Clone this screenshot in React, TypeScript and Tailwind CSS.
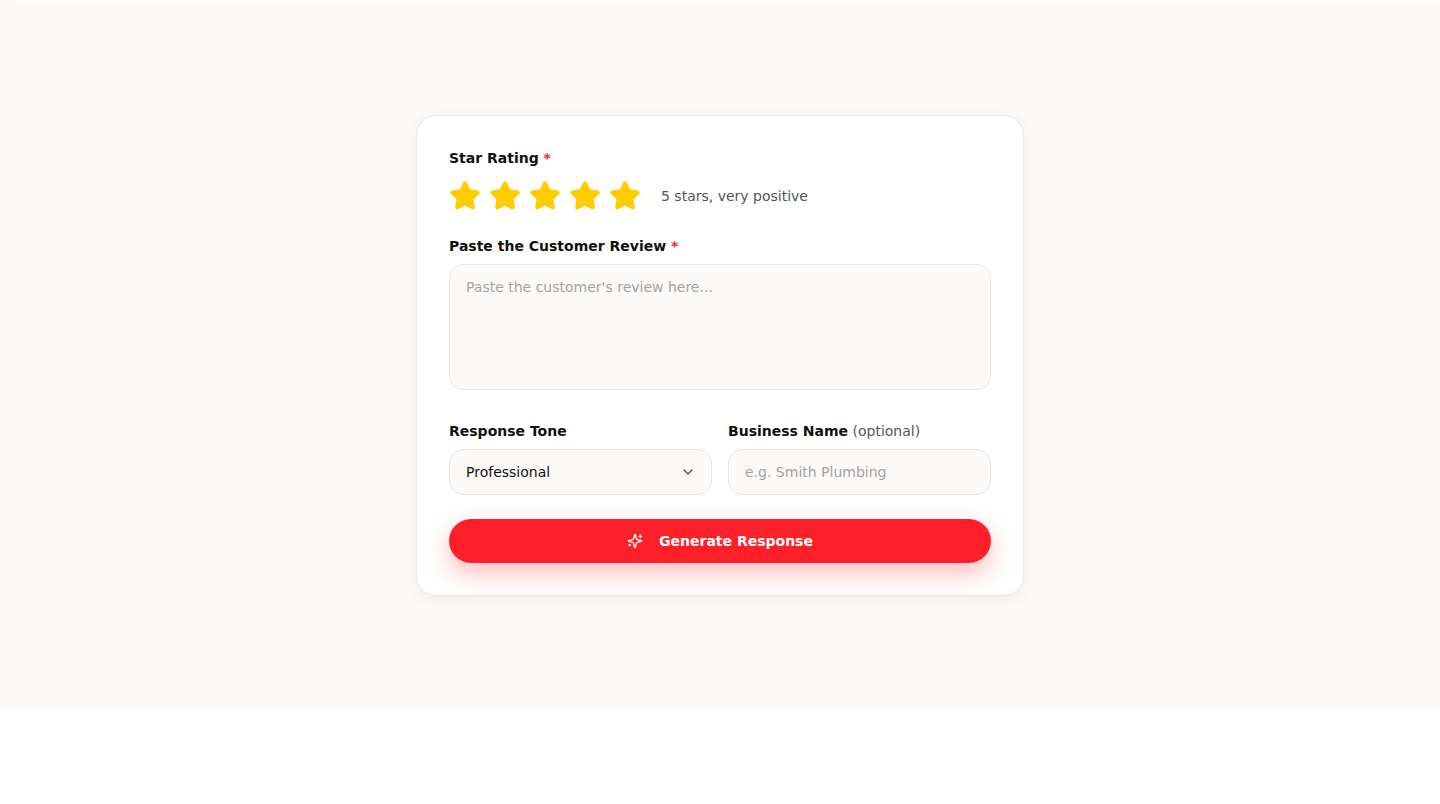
import { ChevronDown, Star } from 'lucide-react'

const font = 'font-["DejaVu_Sans","Liberation_Sans",sans-serif]'

function Label({ text, required, hint }: { text: string; required?: boolean; hint?: string }) {
  return (
    <div className="text-[14px] leading-5 font-bold text-[#111111]">
      {text}
      {required && <span className="text-[#ff1f29]"> *</span>}
      {hint && <span className="font-normal text-[#555555]"> {hint}</span>}
    </div>
  )
}

// older lucide sparkles, the installed one has a circle in place of the small plus
function SparkIcon() {
  return (
    <svg width="16" height="16" viewBox="0 0 24 24" fill="none" stroke="currentColor" strokeWidth="2" strokeLinecap="round" strokeLinejoin="round">
      <path d="M9.937 15.5A2 2 0 0 0 8.5 14.063l-6.135-1.582a.5.5 0 0 1 0-.962L8.5 9.936A2 2 0 0 0 9.937 8.5l1.582-6.135a.5.5 0 0 1 .963 0L14.063 8.5A2 2 0 0 0 15.5 9.937l6.135 1.581a.5.5 0 0 1 0 .964L15.5 14.063a2 2 0 0 0-1.437 1.437l-1.582 6.135a.5.5 0 0 1-.963 0z" />
      <path d="M20 3v4" />
      <path d="M22 5h-4" />
      <path d="M4 17v2" />
      <path d="M5 18H3" />
    </svg>
  )
}

export default function App() {
  return (
    <div className={`${font} bg-white min-h-[804px]`}>
      <div className="h-[708px] bg-[#fcfaf8] flex flex-col">
        <div className="h-[2px] ml-4 bg-[#fffefd]" />
        <div className="flex justify-center pt-[113px]">
          <div className="w-[608px] h-[481px] rounded-[20px] bg-white border border-[#e8e6e4] p-8 shadow-[0_4px_16px_rgba(0,0,0,0.05)] opacity-[0.999]">
            <Label text="Star Rating" required />
            <div className="flex items-center mt-3 h-8">
              <div className="flex gap-2">
                {[1, 2, 3, 4, 5].map(n => (
                  <Star key={n} size={32} className="text-[#ffcc00] fill-[#ffcc00]" />
                ))}
              </div>
              <span className="ml-5 text-[14px] text-[#555555]">5 stars, very positive</span>
            </div>

            <div className="mt-6">
              <Label text="Paste the Customer Review" required />
            </div>
            <textarea
              placeholder="Paste the customer's review here..."
              className="block mt-2 w-full h-[126px] resize-none rounded-[14px] border border-[#e8e6e4] bg-[#fcfaf8] px-4 py-3 text-[14px] leading-5 outline-none placeholder:text-[#a3a3a3]"
            />

            <div className="grid grid-cols-2 gap-4 mt-[31px]">
              <div>
                <Label text="Response Tone" />
                <div className="mt-2 h-[46px] flex items-center justify-between rounded-[14px] border border-[#e8e6e4] bg-[#fcfaf8] pl-4 pr-[15px] text-[14px] text-[#111111]">
                  <span>Professional</span>
                  <ChevronDown size={16} className="text-[#555555]" />
                </div>
              </div>
              <div>
                <Label text="Business Name" hint="(optional)" />
                <input
                  placeholder="e.g. Smith Plumbing"
                  className="block mt-2 w-full h-[46px] rounded-[14px] border border-[#e8e6e4] bg-[#fcfaf8] px-4 text-[14px] outline-none placeholder:text-[#a3a3a3]"
                />
              </div>
            </div>

            <button className="mt-6 w-full h-11 flex items-center justify-center gap-4 rounded-full bg-[#ff1f29] text-white text-[14px] font-bold shadow-[0_10px_24px_rgba(255,31,41,0.3)]">
              <SparkIcon />
              Generate Response
            </button>
          </div>
        </div>
      </div>
    </div>
  )
}
